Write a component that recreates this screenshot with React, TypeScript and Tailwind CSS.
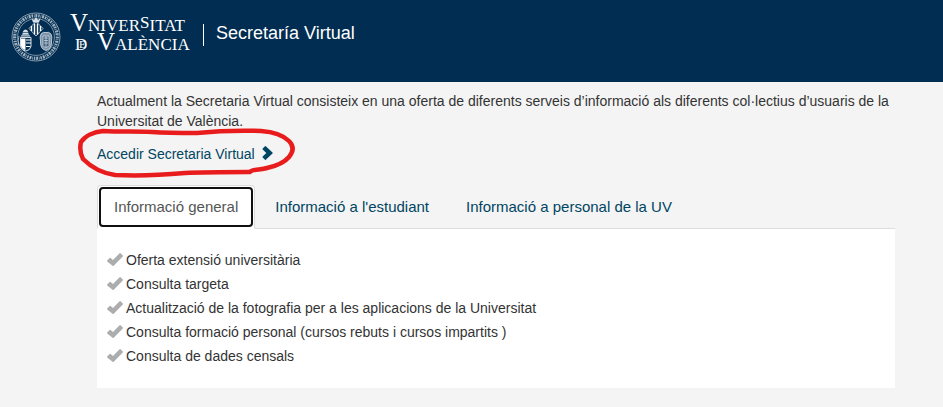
import { useState } from 'react';
import clsx from 'clsx';

interface TabItem {
  id: string;
  label: string;
  services: string[];
}

const tabs: TabItem[] = [
  {
    id: 'general',
    label: 'Informació general',
    services: [
      'Oferta extensió universitària',
      'Consulta targeta',
      'Actualització de la fotografia per a les aplicacions de la Universitat',
      'Consulta formació personal (cursos rebuts i cursos impartits )',
      'Consulta de dades censals',
    ],
  },
  { id: 'estudiant', label: "Informació a l'estudiant", services: [] },
  { id: 'personal', label: 'Informació a personal de la UV', services: [] },
];

const Seal = () => (
  <svg viewBox="0 0 50 50" className="size-[50px] shrink-0" fill="none" stroke="#d5dde5" aria-hidden="true">
    {/* Lettered ring */}
    <circle cx="25" cy="25" r="24" strokeWidth="0.8" opacity="0.8" />
    <circle cx="25" cy="25" r="21.3" strokeWidth="3.2" strokeDasharray="1.5 0.9 0.7 0.8 2 0.9" opacity="0.75" />
    <circle cx="25" cy="25" r="18.4" strokeWidth="0.7" opacity="0.8" />
    {/* Top lozenge with crown */}
    <path d="M20.500 6l2.500 2 2-3 2 3 2.500-2-1.500 4.500h-6z" fill="#d5dde5" stroke="none" />
    <path d="M25 9.500l7 7-7 7.500-7-7.500z" strokeWidth="0.8" />
    <path d="M20.500 14v5M23.500 11.500v11M26.500 11.500v11M29.500 14v5" strokeWidth="1.400" stroke="#fff" />
    {/* Left arms with tiara */}
    <path d="M11.500 22q0-4 3-4.500 3 .5 3 4.500l2 2.500h-10z" fill="#d5dde5" stroke="none" />
    <path d="M11 20.500h7M10.500 23h8" stroke="#002d51" strokeWidth="0.600" />
    <path d="M9.500 25.500h10.500v9q-1 4-5.250 4.500-4.250-.5-5.250-4.500z" strokeWidth="1" />
    <path d="M10 26.500h4.500v11.500q-4-1-4.500-4z" fill="#fff" stroke="none" />
    <path d="M15 28h5M15 31h5M15 34.500h4.500" stroke="#fff" strokeWidth="1.200" />
    <path d="M8 24l-1 5 1 5" strokeWidth="0.700" />
    {/* Right cartouche */}
    <path d="M30 22q2-2.500 5-1.500 3-1 5 1.500 1.500 3 .5 7 .5 4-1.500 7-2 2-4 2.500-2-.5-4-2.500-2-3-1.500-7-1-4 .5-7z" strokeWidth="0.8" fill="#7d94aa" />
    <path d="M32 24h6v9.500q-3 4-6 0z" stroke="#d5dde5" strokeWidth="0.700" fill="#3f617f" />
    <path d="M33 26h4M33 28.500h4M33 31h4M35 24v11" strokeWidth="0.700" />
  </svg>
);

const Wordmark = () => (
  <svg
    viewBox="0 0 122 46"
    className="h-[46px] w-[122px] shrink-0 overflow-visible"
    fill="#fff"
    fontFamily="'Liberation Serif', serif"
    fontSize="17"
    role="img"
    aria-label="Vniversitat de València"
  >
    <text x="1" y="19">
      <tspan fontSize="25">V</tspan>NIVER<tspan dy="-3">S</tspan><tspan dy="3">ITAT</tspan>
    </text>
    <text x="6" y="38">D</text>
    <text x="10" y="36" fontSize="11">E</text>
    <text x="28" y="38">
      <tspan fontSize="25">V</tspan>ALÈNCIA
    </text>
  </svg>
);

const CheckIcon = () => (
  <svg viewBox="0 0 16 13" className="-mt-px h-[13px] w-4 shrink-0" fill="#adadad" aria-hidden="true">
    <path d="M.2 7.400L2.600 5q.5-.4 1 0L6 7 12.600.300q.5-.4 1 0l2.200 2.200q.4.500 0 1L6.700 12.700q-.6.500-1.200 0L.200 8.400q-.4-.5 0-1z" />
  </svg>
);

const ChevronIcon = () => (
  <svg viewBox="0 0 12 14" className="-mt-0.5 h-3.5 w-3 shrink-0" fill="#004562" aria-hidden="true">
    <path d="M3 .300L.700 2.600q-.4.400 0 .8L4.300 7 .700 10.600q-.4.400 0 .8L3 13.700q.4.400.8 0l6.700-6.300q.4-.4 0-.8L3.800.300q-.4-.4-.8 0z" />
  </svg>
);

const App = () => {
  const [activeId, setActiveId] = useState('general');
  const active = tabs.find((tab) => tab.id === activeId) ?? tabs[0];

  return (
    <div className="min-h-screen bg-[#f4f4f4] pb-5 font-['Liberation_Sans',Arial,sans-serif] text-sm text-[#333]">
      {/* Header */}
      <header className="flex h-[82px] items-start bg-[#002d51] pl-[11px] pt-3">
        <Seal />
        <div className="ml-2">
          <Wordmark />
        </div>
        <div className="ml-3 mt-3 h-[22px] w-px bg-white" />
        <h1 className="ml-3 mt-[9px] text-lg leading-6 text-white">Secretaría Virtual</h1>
      </header>

      <main className="pl-[97px] pr-12 pt-[9px]">
        <p className="leading-5">
          Actualment la Secretaria Virtual consisteix en una oferta de diferents serveis d’informació als diferents
          col·lectius d’usuaris de la Universitat de València.
        </p>

        <div className="relative mt-[13px] w-fit">
          <a href="#accedir" className="flex items-center gap-[7px] leading-5 text-[#004562]">
            Accedir Secretaria Virtual
            <ChevronIcon />
          </a>
          {/* Hand drawn mark around the link */}
          <svg
            viewBox="0 0 220 52"
            className="pointer-events-none absolute -left-5 -top-4 h-[52px] w-[220px] max-w-none overflow-visible"
            fill="none"
            stroke="#e81c1c"
            strokeWidth="4.5"
            strokeLinecap="round"
            strokeLinejoin="round"
            aria-hidden="true"
          >
            <path d="M172 44C145 44 126 44 108 45C86 47 58 48 38 47C24 45 13 38 6 31C3 25 3 18 4 14C8 8 17 4 26 3C45 4 60 3 75 4C90 5 105 5 120 5C140 3 154 2 184 3C197 4 207 8 212 13C217 18 217 23 212 29C207 35 199 38 190 40C184 42 175 41 173 44" />
          </svg>
        </div>

        {/* Tabs */}
        <div role="tablist" className="mt-[21px] flex gap-[3px] border-b border-[#ddd]">
          {tabs.map((tab) => (
            <button
              key={tab.id}
              id={`tab-${tab.id}`}
              type="button"
              role="tab"
              aria-selected={tab.id === activeId}
              aria-controls="tab-panel"
              onClick={() => setActiveId(tab.id)}
              className={clsx(
                '-mb-px rounded-t border p-px text-[15px] leading-[22px]',
                tab.id === activeId
                  ? 'border-x-[#ddd] border-t-[#ddd] border-b-white bg-white text-[#555]'
                  : 'border-transparent text-[#004562]'
              )}
            >
              <span
                className={clsx(
                  'block rounded border-2 px-[13px] py-[7px]',
                  tab.id === activeId ? 'border-[#101010]' : 'border-transparent'
                )}
              >
                {tab.label}
              </span>
            </button>
          ))}
        </div>

        <div
          id="tab-panel"
          role="tabpanel"
          aria-labelledby={`tab-${active.id}`}
          className="bg-white px-2.5 pb-5 pt-[19px]"
        >
          <ul>
            {active.services.map((service) => (
              <li key={service} className="flex items-center gap-[3px] leading-6">
                <CheckIcon />
                {service}
              </li>
            ))}
          </ul>
        </div>
      </main>
    </div>
  );
};

export default App;
